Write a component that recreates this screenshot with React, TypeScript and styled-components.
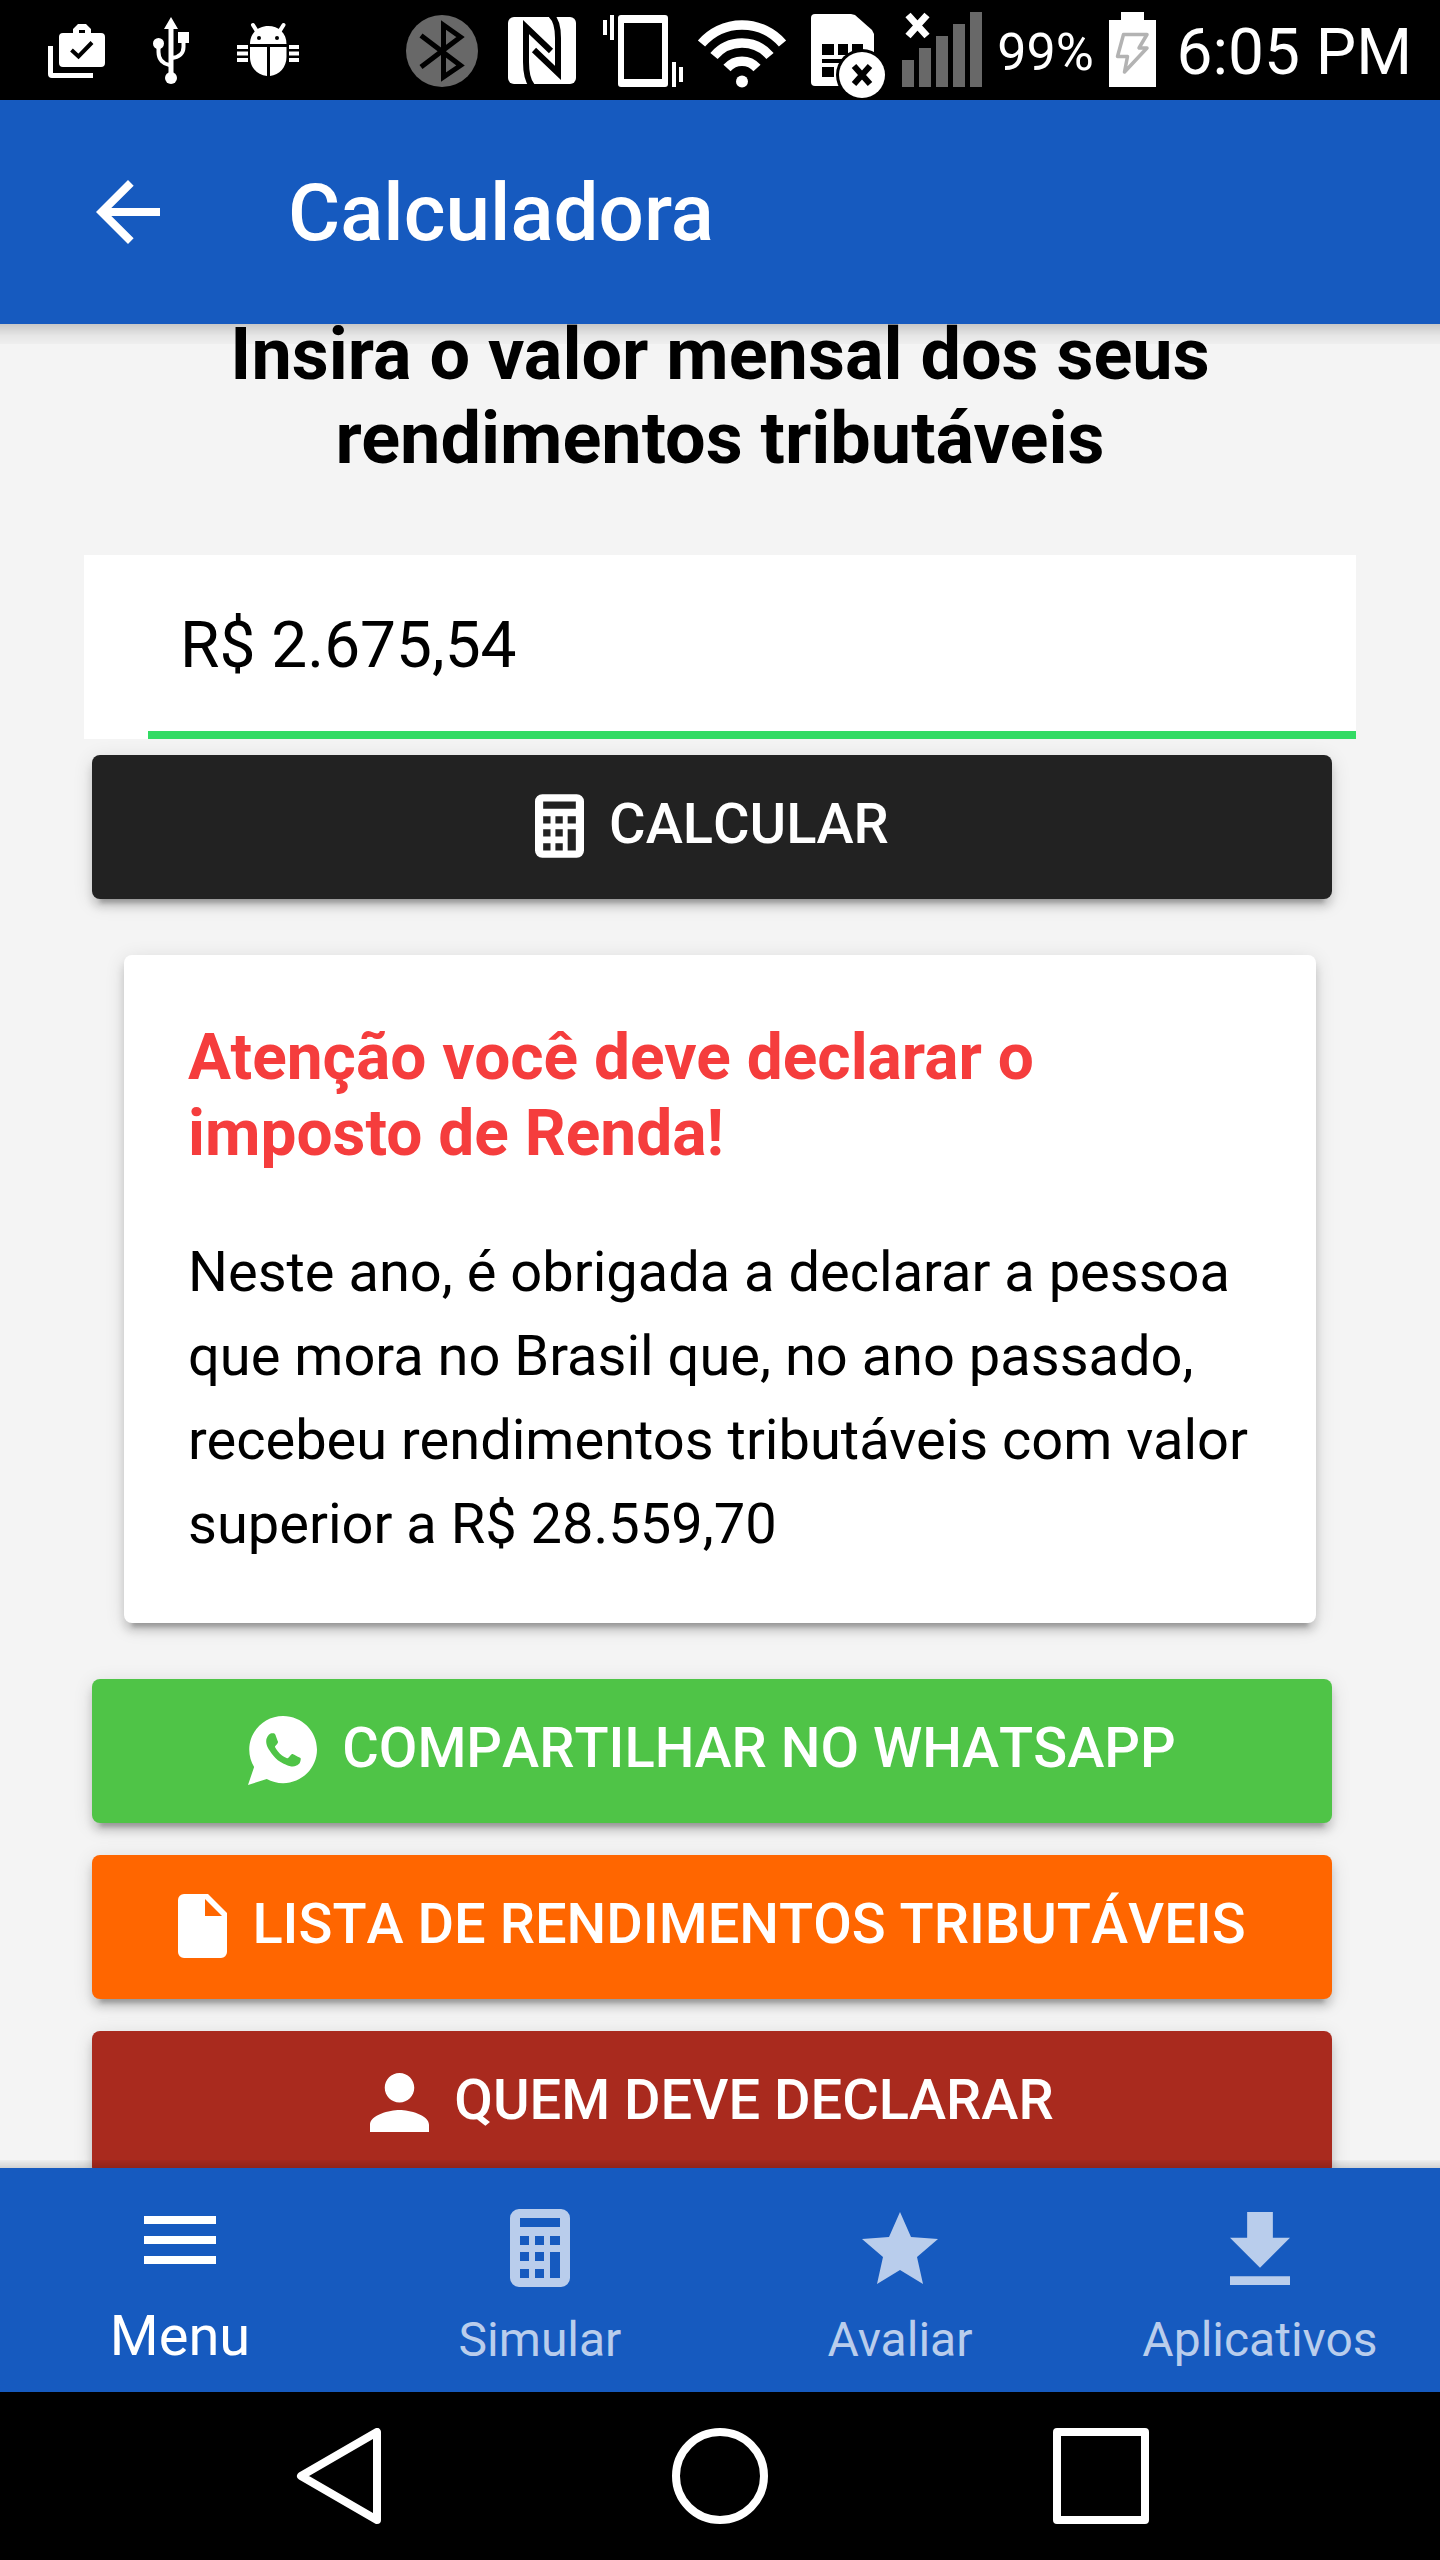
import React, { useState } from "react";
import styled, { createGlobalStyle } from "styled-components";
import { IoLogoWhatsapp } from "react-icons/io";

const BLUE = "#165abf";
const GREY = "#686868";

const GlobalStyle = createGlobalStyle`
  *, *::before, *::after { box-sizing: border-box; }
  body {
    margin: 0;
    background: #000;
    font-family: Roboto, "Noto Sans", sans-serif;
    color: #000;
  }
`;

const Screen = styled.div`
  display: flex;
  flex-direction: column;
  height: 100vh;
`;

/* ---------- system status bar ---------- */

const StatusBar = styled.div`
  flex: none;
  display: flex;
  justify-content: space-between;
  height: 100px;
  padding: 0 28px 0 36px;
  background: #000;
  color: #fff;
`;

const StatusGroup = styled.div`
  display: flex;
  align-items: center;
`;

const BatteryLevel = styled.span`
  width: 110px;
  text-align: center;
  font-size: 52px;
  line-height: 64px;
  padding-top: 6px;
`;

const Clock = styled.span`
  margin-left: 8px;
  font-size: 64px;
  line-height: 76px;
  padding-top: 6px;
`;

type StatusIconProps = { x: number; w: number; children: React.ReactNode };

/* Status glyphs share one coordinate strip, each icon shows its own slice. */
const StatusIcon = ({ x, w, children }: StatusIconProps) => (
  <svg width={w} height={100} viewBox={`${x} 0 ${w} 100`} fill="#fff" aria-hidden="true">
    {children}
  </svg>
);

/* ---------- app header ---------- */

const Header = styled.header`
  position: relative;
  z-index: 2;
  flex: none;
  display: flex;
  align-items: center;
  gap: 112px;
  height: 224px;
  padding: 0 80px;
  background: ${BLUE};
  color: #fff;

  &::after {
    content: "";
    position: absolute;
    left: 0;
    right: 0;
    top: 100%;
    height: 20px;
    background: linear-gradient(rgba(0, 0, 0, 0.18), rgba(0, 0, 0, 0.05) 60%, rgba(0, 0, 0, 0.02));
    pointer-events: none;
  }
`;

const IconButton = styled.button`
  display: flex;
  padding: 0;
  border: 0;
  background: none;
  color: inherit;
  cursor: pointer;
`;

const Title = styled.h1`
  margin: 0;
  padding-top: 2px;
  font-size: 80px;
  line-height: 96px;
  font-weight: 500;
`;

/* ---------- content ---------- */

const Content = styled.main`
  flex: 1;
  min-height: 0;
  overflow-y: auto;
  scrollbar-width: none;
  padding: 0 84px;
  background: #f4f4f4;
`;

const Prompt = styled.h2`
  margin: -11px 0 74px;
  font-size: 72px;
  line-height: 84px;
  font-weight: 700;
  text-align: center;
`;

const Field = styled.div`
  padding-left: 64px;
  background: #fff;
`;

const AmountInput = styled.input`
  display: block;
  width: 100%;
  height: 184px;
  padding: 4px 32px 0;
  border: 0;
  border-bottom: 8px solid #32db64;
  border-radius: 0;
  outline: 0;
  background: transparent;
  color: #000;
  font: 400 64px/76px Roboto, "Noto Sans", sans-serif;
`;

const elevation = `
  box-shadow: 0 8px 8px 0 rgba(0, 0, 0, 0.14),
    0 12px 4px -8px rgba(0, 0, 0, 0.2),
    0 4px 20px 0 rgba(0, 0, 0, 0.12);
`;

const Actions = styled.div`
  display: flex;
  flex-direction: column;
  gap: 32px;
  padding: 16px 24px 16px 8px;
`;

const ActionButton = styled.button<{ $color: string }>`
  display: flex;
  align-items: center;
  justify-content: center;
  gap: 25px;
  width: 100%;
  height: 144px;
  flex: none;
  padding: 0 0 2px;
  border: 0;
  border-radius: 8px;
  background: ${(p) => p.$color};
  color: #fff;
  font: 500 56px/64px Roboto, "Noto Sans", sans-serif;
  font-kerning: none;
  text-transform: uppercase;
  white-space: nowrap;
  cursor: pointer;
  ${elevation}
`;

const ActionLabel = styled.span`
  padding-bottom: 4px;
`;

const Card = styled.section`
  margin: 40px;
  padding: 65px 64px 57px;
  border-radius: 8px;
  background: #fff;
  ${elevation}
`;

const CardTitle = styled.h3`
  margin: 0 0 58px;
  color: #f53d3d;
  font-size: 64px;
  line-height: 76px;
  font-weight: 700;
`;

const CardText = styled.p`
  margin: 0;
  font-size: 56px;
  line-height: 84px;
`;

/* ---------- bottom tabs ---------- */

const Tabs = styled.nav`
  position: relative;
  z-index: 2;
  flex: none;
  display: grid;
  grid-template-columns: repeat(4, 1fr);
  height: 224px;
  background: ${BLUE};

  &::before {
    content: "";
    position: absolute;
    left: 0;
    right: 0;
    bottom: 100%;
    height: 8px;
    background: linear-gradient(rgba(0, 0, 0, 0.02), rgba(0, 0, 0, 0.14));
    pointer-events: none;
  }
`;

const Tab = styled.a<{ $active?: boolean }>`
  display: flex;
  flex-direction: column;
  align-items: center;
  justify-content: space-between;
  padding: 32px 0 24px;
  color: ${(p) => (p.$active ? "#fff" : "#b9cdec")};
  font-size: ${(p) => (p.$active ? "56px" : "48px")};
  line-height: ${(p) => (p.$active ? "64px" : "56px")};
  text-decoration: none;
`;

const TabIcon = styled.span<{ $active?: boolean }>`
  display: flex;
  align-items: center;
  height: ${(p) => (p.$active ? "80px" : "96px")};
`;

/* ---------- system navigation ---------- */

const SystemNav = styled.nav`
  flex: none;
  display: flex;
  align-items: center;
  justify-content: center;
  gap: 285px;
  height: 168px;
  background: #000;
  color: #fff;
`;

/* ---------- icons ---------- */

const CalculatorIcon = ({ width, height }: { width: number; height: number }) => (
  <svg width={width} height={height} viewBox="0 0 60 78" fill="currentColor" aria-hidden="true">
    <path
      fillRule="evenodd"
      d="M9 0h42a9 9 0 0 1 9 9v60a9 9 0 0 1-9 9H9a9 9 0 0 1-9-9V9a9 9 0 0 1 9-9z
         M10 9v9h40V9z M10 27v9h9v-9z M25 27v9h9v-9z M40 27v9h10v-9z
         M10 43v9h9v-9z M25 43v9h9v-9z M40 43v26h10V43z M10 60v9h9v-9z M25 60v9h9v-9z"
    />
  </svg>
);

const DocumentIcon = () => (
  <svg width="49" height="64" viewBox="0 0 49 64" fill="currentColor" aria-hidden="true">
    <path fillRule="evenodd" d="M6 0h24l19 19v39a6 6 0 0 1-6 6H6a6 6 0 0 1-6-6V6a6 6 0 0 1 6-6z M27 5v17h17z" />
  </svg>
);

const PersonIcon = () => (
  <svg width="59" height="59" viewBox="4 4 16 16" fill="currentColor" aria-hidden="true">
    <path d="M12 12c2.2 0 4-1.8 4-4s-1.8-4-4-4-4 1.8-4 4 1.800 4 4 4zm0 2c-2.650 0-8 1.350-8 4v2h16v-2c0-2.650-5.350-4-8-4z" />
  </svg>
);

const WhatsappIcon = () => (
  <svg width="69" height="69" viewBox="32 32 448 448" aria-hidden="true">
    <IoLogoWhatsapp size={512} />
  </svg>
);

const StatusStrip = () => (
  <StatusBar>
    <StatusGroup>
      <StatusIcon x={36} w={96}>
        <path
          fillRule="evenodd"
          d="M63 33h10v-4l5-5h8l5 5v4h10a4 4 0 0 1 4 4v26a4 4 0 0 1-4 4H63a4 4 0 0 1-4-4V37a4 4 0 0 1 4-4z M79 30v3h6v-3z"
        />
        <path d="M71.500 50l7 6.500 13.500-14" fill="none" stroke="#000" strokeWidth="4" />
        <path d="M48 46h5v27h40v5H52a4 4 0 0 1-4-4z" />
      </StatusIcon>
      <StatusIcon x={132} w={84}>
        <path d="M171 17l7 12h-4.500v46h-5V29H164z" />
        <circle cx="171" cy="78" r="6" />
        <circle cx="158.500" cy="43.500" r="5.500" />
        <path d="M178 32h11v11h-11z" />
        <path d="M158.500 46v6c0 8 5 12 11 13M183.500 42v5c0 6-4 10.500-12 11" fill="none" stroke="#fff" strokeWidth="4" />
      </StatusIcon>
      <StatusIcon x={216} w={100}>
        <path d="M250 44c0-11 8-18 18.250-18s18.250 7 18.250 18z" />
        <path d="M250 47h17v29c-10-1-17-9-17-19zM270 47h16.500v10c0 10-7 18-16.500 19z" />
        <path d="M253 25l5 8M283.500 25l-5 8" stroke="#fff" strokeWidth="4" strokeLinecap="round" />
        <path d="M237 45h11v4h-11zM237 51.500h11v4h-11zM237 58h11v4h-11zM289 45h10v4h-10zM289 51.500h10v4h-10zM289 58h10v4h-10z" />
        <circle cx="259" cy="38" r="2" fill="#000" />
        <circle cx="277" cy="38" r="2" fill="#000" />
      </StatusIcon>
    </StatusGroup>
    <StatusGroup>
      <StatusIcon x={396} w={96}>
        <circle cx="442" cy="51" r="36" fill={GREY} />
        <path d="M421 35.500l39.500 30L443.500 77V25l17 12L421 67" fill="none" stroke="#000" strokeWidth="5" />
      </StatusIcon>
      <StatusIcon x={492} w={96}>
        <rect x="508" y="17" width="68" height="67" rx="6" />
        <path
          d="M532 86C527 80 526 72 526 62V27l25 24M551 15C556.500 20 558 30 558 38v35L534 50"
          fill="none"
          stroke="#000"
          strokeWidth="6"
        />
      </StatusIcon>
      <StatusIcon x={588} w={102}>
        <path fillRule="evenodd" d="M621 15h44a3 3 0 0 1 3 3v66a3 3 0 0 1-3 3h-44a3 3 0 0 1-3-3V18a3 3 0 0 1 3-3z M624 23v56h38V23z" />
        <path d="M603 20h4v15h-4zM610 15h4v25h-4zM672 62h4v25h-4zM679 67h4v15h-4z" />
      </StatusIcon>
      <StatusIcon x={690} w={108}>
        <path
          d="M701.500 43.500a53.400 53.400 0 0 1 81 0M714 56a36.700 36.700 0 0 1 56 0M727 68a20 20 0 0 1 30 0"
          fill="none"
          stroke="#fff"
          strokeWidth="9.500"
        />
        <circle cx="742" cy="81.500" r="6" />
      </StatusIcon>
      <StatusIcon x={798} w={94}>
        <path d="M815 14h36l4 1 17 15 2 4v48a4 4 0 0 1-4 4h-55a4 4 0 0 1-4-4V18a4 4 0 0 1 4-4z" />
        <path d="M822 44h12v11h-12zM838 44h10v11h-10zM852 44h11v11h-11zM822 59h20v4h-20zM822 67h12v10h-12z" fill="#000" />
        <circle cx="862" cy="75" r="26" fill="#000" />
        <circle cx="862" cy="75" r="23" />
        <path d="M854 66l16 18M870 66l-16 18" stroke="#000" strokeWidth="6" />
      </StatusIcon>
      <StatusIcon x={892} w={98}>
        <path d="M902 60h12v27h-12zM919 48h12v39h-12zM936 36h12v51h-12zM953 24h12v63h-12zM970 12h12v75h-12z" fill={GREY} />
        <path d="M908 15l19 21M927 15l-19 21" stroke="#fff" strokeWidth="7" />
      </StatusIcon>
      <BatteryLevel>99%</BatteryLevel>
      <StatusIcon x={1100} w={68}>
        <path d="M1121 12h23v8h12v67h-47V20h12z" />
        <path
          d="M1123.500 34.500h23.500l-8 13.500h8l-22.500 24 3-15.500h-10z"
          fill="none"
          stroke="#b3b3b3"
          strokeWidth="3.500"
          strokeLinejoin="round"
        />
      </StatusIcon>
      <Clock>6:05 PM</Clock>
    </StatusGroup>
  </StatusBar>
);

export default function App() {
  const [amount, setAmount] = useState("R$ 2.675,54");

  return (
    <>
      <GlobalStyle />
      <Screen>
        <StatusStrip />

        <Header>
          <IconButton type="button" aria-label="Voltar">
            <svg width="96" height="96" viewBox="0 0 24 24" fill="currentColor" aria-hidden="true">
              <path d="M20 11H7.830l5.590-5.590L12 4l-8 8 8 8 1.410-1.410L7.830 13H20v-2z" />
            </svg>
          </IconButton>
          <Title>Calculadora</Title>
        </Header>

        <Content>
          <Prompt>
            <label htmlFor="amount">Insira o valor mensal dos seus rendimentos tributáveis</label>
          </Prompt>
          <Field>
            <AmountInput
              id="amount"
              type="text"
              inputMode="decimal"
              value={amount}
              onChange={(e) => setAmount(e.target.value)}
            />
          </Field>
          <Actions>
            <ActionButton type="button" $color="#222222">
              <CalculatorIcon width={49} height={64} />
              <ActionLabel>Calcular</ActionLabel>
            </ActionButton>
          </Actions>

          <Card>
            <CardTitle>Atenção você deve declarar o imposto de Renda!</CardTitle>
            <CardText>
              Neste ano, é obrigada a declarar a pessoa que mora no Brasil que, no ano passado, recebeu
              rendimentos tributáveis com valor superior a R$ 28.559,70
            </CardText>
          </Card>

          <Actions>
            <ActionButton type="button" $color="#4fc447">
              <WhatsappIcon />
              <ActionLabel>Compartilhar no WhatsApp</ActionLabel>
            </ActionButton>
            <ActionButton type="button" $color="#ff6600">
              <DocumentIcon />
              <ActionLabel>Lista de rendimentos tributáveis</ActionLabel>
            </ActionButton>
            <ActionButton type="button" $color="#a92a1e">
              <PersonIcon />
              <ActionLabel>Quem deve declarar</ActionLabel>
            </ActionButton>
          </Actions>
        </Content>

        <Tabs>
          <Tab href="#menu" $active>
            <TabIcon $active>
              <svg width="72" height="48" viewBox="0 0 72 48" fill="currentColor" aria-hidden="true">
                <path d="M0 0h72v8H0zM0 20h72v8H0zM0 40h72v8H0z" />
              </svg>
            </TabIcon>
            Menu
          </Tab>
          <Tab href="#simular">
            <TabIcon>
              <CalculatorIcon width={60} height={78} />
            </TabIcon>
            Simular
          </Tab>
          <Tab href="#avaliar">
            <TabIcon>
              <svg width="76" height="72" viewBox="0 0 76 72" fill="currentColor" aria-hidden="true">
                <path d="M38 0l11 25 27 2-21 18 6 27-23-14-23 14 6-27L0 27l27-2z" />
              </svg>
            </TabIcon>
            Avaliar
          </Tab>
          <Tab href="#aplicativos">
            <TabIcon>
              <svg width="60" height="73" viewBox="5 3 14 17" fill="currentColor" aria-hidden="true">
                <path d="M19 9h-4V3H9v6H5l7 7 7-7zM5 18v2h14v-2H5z" />
              </svg>
            </TabIcon>
            Aplicativos
          </Tab>
        </Tabs>

        <SystemNav>
          <IconButton type="button" aria-label="Voltar (sistema)">
            <svg width="96" height="96" viewBox="0 0 96 96" fill="none" stroke="currentColor" strokeWidth="8" strokeLinejoin="round" aria-hidden="true">
              <path d="M86 4v88L10 48z" />
            </svg>
          </IconButton>
          <IconButton type="button" aria-label="Início">
            <svg width="96" height="96" viewBox="0 0 96 96" fill="none" stroke="currentColor" strokeWidth="8" aria-hidden="true">
              <circle cx="48" cy="48" r="44" />
            </svg>
          </IconButton>
          <IconButton type="button" aria-label="Recentes">
            <svg width="96" height="96" viewBox="0 0 96 96" fill="none" stroke="currentColor" strokeWidth="8" strokeLinejoin="round" aria-hidden="true">
              <path d="M4 4h88v88H4z" />
            </svg>
          </IconButton>
        </SystemNav>
      </Screen>
    </>
  );
}
